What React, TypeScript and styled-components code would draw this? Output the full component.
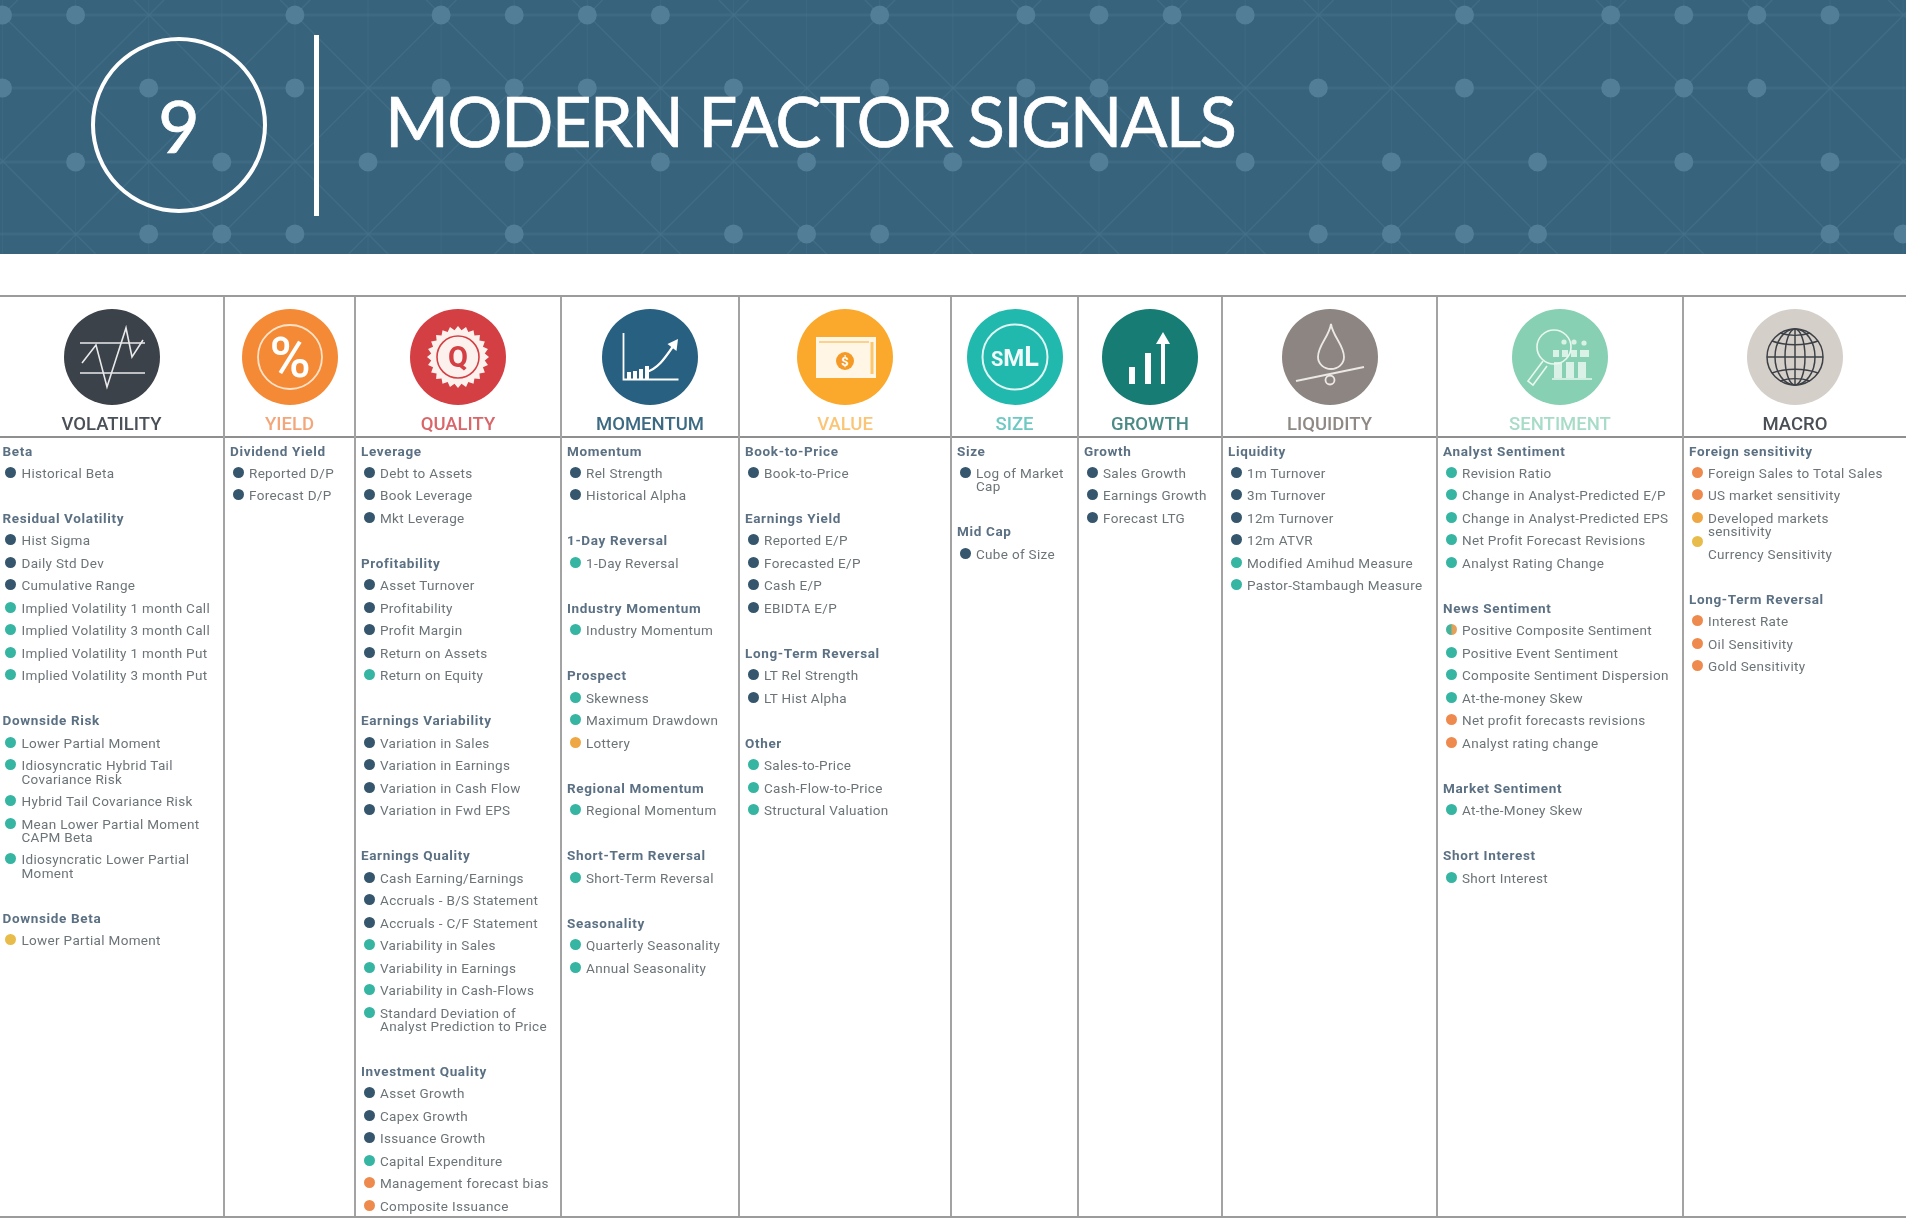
import { ReactNode } from 'react';
import styled, { createGlobalStyle } from 'styled-components';

const GlobalStyle = createGlobalStyle`
  html, body {
    margin: 0;
    padding: 0;
    background: #fff;
  }
  body {
    font-family: Roboto, "Liberation Sans", sans-serif;
    overflow: hidden;
  }
`;

const Page = styled.div`
  width: 1906px;
  height: 1218px;
  overflow: hidden;
`;

const Banner = styled.header`
  position: relative;
  height: 250px;
  padding: 0 0 4px 91px;
  display: flex;
  align-items: center;
  background: #38637d;
  overflow: hidden;
`;

const BannerArt = styled.svg`
  position: absolute;
  inset: 0;
  width: 1906px;
  height: 254px;
`;

const Badge = styled.div`
  position: relative;
  box-sizing: border-box;
  width: 176px;
  height: 176px;
  border: 4px solid #fff;
  border-radius: 50%;
  display: flex;
  align-items: center;
  justify-content: center;
  color: #fff;
  font: 400 72px/1 Lato, sans-serif;
  -webkit-text-stroke: 0.7px #fff;
`;

const Divider = styled.div`
  position: relative;
  width: 5px;
  height: 181px;
  margin: 0 66px 0 47px;
  background: #fff;
`;

const Title = styled.h1`
  position: relative;
  margin: 0 0 10px;
  color: #fff;
  font: 400 69px/1 Lato, sans-serif;
  letter-spacing: -1.7px;
  -webkit-text-stroke: 0.7px #fff;
  white-space: nowrap;
`;

const Table = styled.section`
  display: flex;
  box-sizing: border-box;
  height: 923px;
  margin-top: 41px;
  border-top: 2px solid #9b9b9b;
  border-bottom: 2px solid #9b9b9b;
  filter: blur(0.6px);
`;

const Column = styled.div<{ $width: number; $first?: boolean }>`
  flex: none;
  box-sizing: border-box;
  width: ${(p) => p.$width}px;
  border-left: ${(p) => (p.$first ? 'none' : '2px solid #a3a3a3')};
`;

const ColumnHead = styled.div`
  height: 141px;
  box-sizing: border-box;
  padding-top: 12px;
  border-bottom: 2px solid #8f8f8f;
  display: flex;
  flex-direction: column;
  align-items: center;
`;

const IconDisc = styled.svg`
  display: block;
  width: 96px;
  height: 96px;
  flex: none;
`;

const ColumnLabel = styled.div<{ $color: string }>`
  margin-top: 8px;
  color: ${(p) => p.$color};
  font-size: 18.5px;
  font-weight: 500;
  line-height: 22px;
  white-space: nowrap;
`;

const ColumnBody = styled.div<{ $first?: boolean }>`
  padding: 6.5px 0 0 ${(p) => (p.$first ? '2.5px' : '5px')};
`;

const Group = styled.div`
  display: flow-root;
  margin-bottom: 22.5px;
`;

const GroupTitle = styled.div`
  height: 13.3px;
  margin-bottom: 9.2px;
  color: #5b7083;
  font-size: 13.5px;
  font-weight: 700;
  line-height: 13.3px;
  letter-spacing: 0.65px;
  white-space: nowrap;
`;

const Item = styled.div`
  display: flex;
  align-items: flex-start;
  margin-bottom: 9.2px;
`;

const Dot = styled.span<{ $tone: string; $raised?: boolean }>`
  flex: none;
  width: 11px;
  height: 11px;
  margin: ${(p) => (p.$raised ? '-12px' : '0')} 5.5px 0 2.5px;
  border-radius: 50%;
  background: ${(p) => p.$tone};
`;

const ItemText = styled.span`
  color: #6c7478;
  font-size: 13.5px;
  line-height: 13.3px;
  letter-spacing: 0.32px;
  white-space: pre;
`;

const tones: Record<string, string> = {
  n: '#35566d',
  t: '#35b5a2',
  o: '#ee8a4e',
  a: '#efa743',
  y: '#e8bc4a',
  m: 'linear-gradient(90deg, #43b39c 0 40%, #e3a15a 60% 100%)',
};

type Entry = [string, keyof typeof tones | string, boolean?];
type FactorGroup = { title: string; items: Entry[] };

const rows = (tone: string, ...names: string[]): Entry[] => names.map((n) => [n, tone]);

const diamondLines = () => {
  const lines: ReactNode[] = [];
  for (let k = -2; k < 15; k++) {
    const a = 134 + 146.2 * k;
    const b = 164 + 146.2 * k;
    lines.push(<line key={`a${k}`} x1={a} y1={0} x2={a + 260} y2={260} />);
    lines.push(<line key={`b${k}`} x1={b} y1={0} x2={b - 260} y2={260} />);
  }
  return lines;
};

const nodeRows: [number, number[]][] = [
  [15, [0, 1, 4, 6, 7, 8, 9, 12, 14, 15, 16, 17, 20, 22, 23, 24, 25]],
  [88, [0, 2, 4, 6, 7, 8, 10, 12, 14, 15, 18, 20, 22, 23, 24]],
  [162, [1, 3, 5, 7, 9, 11, 13, 15, 17, 19, 21, 23, 25]],
  [234, [2, 3, 4, 7, 10, 11, 12, 18, 19, 20, 21, 25, 26]],
];
const nodeX = (i: number) => 2.5 + 73.1 * i;

const BannerPattern = () => (
  <BannerArt viewBox="0 0 1906 254">
    <g stroke="#4a7690" strokeWidth="1.4" opacity="0.5">
      {diamondLines()}
    </g>
    <g stroke="#4a7690" strokeWidth="1.2" opacity="0.3">
      {Array.from({ length: 27 }, (_, i) => (
        <line key={i} x1={nodeX(i)} y1={0} x2={nodeX(i)} y2={254} />
      ))}
    </g>
    <g stroke="#47728c" strokeWidth="3" opacity="0.5">
      {nodeRows.map(([y]) => (
        <line key={y} x1={0} y1={y} x2={1906} y2={y} />
      ))}
    </g>
    <g fill="#527e98">
      {nodeRows.map(([y, xs]) =>
        xs.map((i) => <circle key={`${y}-${i}`} cx={nodeX(i)} cy={y} r={9.5} />)
      )}
    </g>
  </BannerArt>
);

const VolatilityIcon = () => (
  <IconDisc viewBox="0 0 96 96">
    <circle cx="48" cy="48" r="48" fill="#3c4249" />
    <g fill="none" stroke="#e8e9ea" strokeWidth="1.6">
      <path d="M16 34H81M16 64H81" />
      <path d="M18 54L32 36L43 78L62 19L68 48L79 31" />
    </g>
  </IconDisc>
);

const YieldIcon = () => (
  <IconDisc viewBox="0 0 96 96">
    <circle cx="48" cy="48" r="48" fill="#f58a36" />
    <circle cx="48" cy="48" r="32" fill="none" stroke="#fde2c8" strokeWidth="1.8" />
    <text x="48" y="68" textAnchor="middle" fill="#fff" fontFamily="Roboto, sans-serif" fontWeight="500" fontSize="56">
      %
    </text>
  </IconDisc>
);

const gearPoints = () => {
  const pts: string[] = [];
  const teeth = 24;
  for (let i = 0; i < teeth * 2; i++) {
    const r = i % 2 === 0 ? 31 : 27;
    const ang = (i * Math.PI) / teeth;
    pts.push(`${(48 + r * Math.cos(ang)).toFixed(2)},${(48 + r * Math.sin(ang)).toFixed(2)}`);
  }
  return pts.join(' ');
};

const QualityIcon = () => (
  <IconDisc viewBox="0 0 96 96">
    <circle cx="48" cy="48" r="48" fill="#d43f44" />
    <polygon points={gearPoints()} fill="#fdf1ee" />
    <circle cx="48" cy="48" r="21" fill="none" stroke="#d43f44" strokeWidth="1.6" />
    <text x="48" y="58" textAnchor="middle" fill="#d43f44" fontFamily="Roboto, sans-serif" fontWeight="700" fontSize="29">
      Q
    </text>
  </IconDisc>
);

const MomentumIcon = () => (
  <IconDisc viewBox="0 0 96 96">
    <circle cx="48" cy="48" r="48" fill="#276080" />
    <path d="M21.5 24V70.5H76.5" fill="none" stroke="#fff" strokeWidth="1.8" />
    <path d="M25 70V63H29V70ZM31 70V62H35V70ZM37 70V60H41V70ZM43 70V57H47V70Z" fill="#fff" />
    <path d="M44 63C56 60 63 49 72 36" fill="none" stroke="#fff" strokeWidth="2.4" />
    <path d="M76 30L74.5 42L65.5 35Z" fill="#fff" />
  </IconDisc>
);

const ValueIcon = () => (
  <IconDisc viewBox="0 0 96 96">
    <circle cx="48" cy="48" r="48" fill="#fba92d" />
    <rect x="19" y="28" width="60" height="41" fill="#fff6e6" />
    <path d="M22 33H72" stroke="#fbc56f" strokeWidth="1.5" />
    <path d="M75 33V65" stroke="#fcc66c" strokeWidth="3" />
    <circle cx="48" cy="52" r="9" fill="#f59a25" />
    <text x="48" y="57" textAnchor="middle" fill="#fff" fontFamily="Roboto, sans-serif" fontWeight="700" fontSize="13">
      $
    </text>
  </IconDisc>
);

const SizeIcon = () => (
  <IconDisc viewBox="0 0 96 96">
    <circle cx="48" cy="48" r="48" fill="#21b9ae" />
    <circle cx="48" cy="48" r="32.5" fill="none" stroke="#dff6f3" strokeWidth="2" />
    <text x="48" y="57" textAnchor="middle" fill="#f1fbfa" fontFamily="Roboto, sans-serif" fontWeight="700">
      <tspan fontSize="20">S</tspan>
      <tspan fontSize="24">M</tspan>
      <tspan fontSize="27">L</tspan>
    </text>
  </IconDisc>
);

const GrowthIcon = () => (
  <IconDisc viewBox="0 0 96 96">
    <circle cx="48" cy="48" r="48" fill="#167c74" />
    <rect x="27" y="58" width="6" height="17" fill="#fff" />
    <rect x="43" y="44" width="6" height="31" fill="#fff" />
    <path d="M61 34V75" stroke="#fff" strokeWidth="4" />
    <path d="M61 23L68 35H54Z" fill="#fff" />
  </IconDisc>
);

const LiquidityIcon = () => (
  <IconDisc viewBox="0 0 96 96">
    <circle cx="48" cy="48" r="48" fill="#8d8582" />
    <g fill="none" stroke="#ece8e4" strokeWidth="1.8">
      <path d="M49 15C47 28 36 36 36 48C36 55 42 60 49 60C56 60 62 55 62 48C62 36 51 28 49 15Z" />
      <path d="M14 72L82 58" />
      <circle cx="48" cy="71" r="4.5" />
    </g>
  </IconDisc>
);

const SentimentIcon = () => (
  <IconDisc viewBox="0 0 96 96">
    <circle cx="48" cy="48" r="48" fill="#88d0b3" />
    <g fill="none" stroke="#e9f7f1" strokeWidth="1.6">
      <circle cx="42" cy="38" r="17" />
      <path d="M31 52L16 72L21 76L35 57" />
    </g>
    <g fill="#e9f7f1" opacity="0.85">
      <circle cx="52" cy="33" r="2.6" />
      <circle cx="62" cy="33" r="2.6" />
      <circle cx="72" cy="34" r="2.6" />
      <path d="M41 41H47V48H41ZM50 41H56V48H50ZM59 41H65V48H59ZM68 41H77V48H68Z" />
      <path d="M42 53H50V69H42ZM54 53H62V69H54ZM66 53H74V69H66Z" />
    </g>
    <path d="M40 70H80" stroke="#e9f7f1" strokeWidth="1.6" />
  </IconDisc>
);

const MacroIcon = () => (
  <IconDisc viewBox="0 0 96 96">
    <circle cx="48" cy="48" r="48" fill="#d5cfc9" />
    <g fill="none" stroke="#3d4146" strokeWidth="1.5">
      <circle cx="48" cy="48" r="28" />
      <ellipse cx="48" cy="48" rx="10" ry="28" />
      <ellipse cx="48" cy="48" rx="20" ry="28" />
      <path d="M48 20V76M20 48H76" />
      <path d="M25 32C38 37 58 37 71 32M25 64C38 59 58 59 71 64" />
      <path d="M33 24C42 27 54 27 63 24M33 72C42 69 54 69 63 72" />
    </g>
  </IconDisc>
);

type Factor = {
  label: string;
  color: string;
  width: number;
  icon: ReactNode;
  groups: FactorGroup[];
};

const factors: Factor[] = [
  {
    label: 'VOLATILITY',
    color: '#4a5058',
    width: 223,
    icon: <VolatilityIcon />,
    groups: [
      { title: 'Beta', items: rows('n', 'Historical Beta') },
      {
        title: 'Residual Volatility',
        items: [
          ...rows('n', 'Hist Sigma', 'Daily Std Dev', 'Cumulative Range'),
          ...rows(
            't',
            'Implied Volatility 1 month Call',
            'Implied Volatility 3 month Call',
            'Implied Volatility 1 month Put',
            'Implied Volatility 3 month Put'
          ),
        ],
      },
      {
        title: 'Downside Risk',
        items: rows(
          't',
          'Lower Partial Moment',
          'Idiosyncratic Hybrid Tail\nCovariance Risk',
          'Hybrid Tail Covariance Risk',
          'Mean Lower Partial Moment\nCAPM Beta',
          'Idiosyncratic Lower Partial\nMoment'
        ),
      },
      { title: 'Downside Beta', items: rows('y', 'Lower Partial Moment') },
    ],
  },
  {
    label: 'YIELD',
    color: '#f3a67a',
    width: 131,
    icon: <YieldIcon />,
    groups: [{ title: 'Dividend Yield', items: rows('n', 'Reported D/P', 'Forecast D/P') }],
  },
  {
    label: 'QUALITY',
    color: '#d9666a',
    width: 206,
    icon: <QualityIcon />,
    groups: [
      { title: 'Leverage', items: rows('n', 'Debt to Assets', 'Book Leverage', 'Mkt Leverage') },
      {
        title: 'Profitability',
        items: [
          ...rows('n', 'Asset Turnover', 'Profitability', 'Profit Margin', 'Return on Assets'),
          ...rows('t', 'Return on Equity'),
        ],
      },
      {
        title: 'Earnings Variability',
        items: rows('n', 'Variation in Sales', 'Variation in Earnings', 'Variation in Cash Flow', 'Variation in Fwd EPS'),
      },
      {
        title: 'Earnings Quality',
        items: [
          ...rows('n', 'Cash Earning/Earnings', 'Accruals - B/S Statement', 'Accruals - C/F Statement'),
          ...rows(
            't',
            'Variability in Sales',
            'Variability in Earnings',
            'Variability in Cash-Flows',
            'Standard Deviation of\nAnalyst Prediction to Price'
          ),
        ],
      },
      {
        title: 'Investment Quality',
        items: [
          ...rows('n', 'Asset Growth', 'Capex Growth', 'Issuance Growth'),
          ...rows('t', 'Capital Expenditure'),
          ...rows('o', 'Management forecast bias', 'Composite Issuance'),
        ],
      },
    ],
  },
  {
    label: 'MOMENTUM',
    color: '#3d6a83',
    width: 178,
    icon: <MomentumIcon />,
    groups: [
      { title: 'Momentum', items: rows('n', 'Rel Strength', 'Historical Alpha') },
      { title: '1-Day Reversal', items: rows('t', '1-Day Reversal') },
      { title: 'Industry Momentum', items: rows('t', 'Industry Momentum') },
      { title: 'Prospect', items: [...rows('t', 'Skewness', 'Maximum Drawdown'), ...rows('a', 'Lottery')] },
      { title: 'Regional Momentum', items: rows('t', 'Regional Momentum') },
      { title: 'Short-Term Reversal', items: rows('t', 'Short-Term Reversal') },
      { title: 'Seasonality', items: rows('t', 'Quarterly Seasonality', 'Annual Seasonality') },
    ],
  },
  {
    label: 'VALUE',
    color: '#fbc578',
    width: 212,
    icon: <ValueIcon />,
    groups: [
      { title: 'Book-to-Price', items: rows('n', 'Book-to-Price') },
      { title: 'Earnings Yield', items: rows('n', 'Reported E/P', 'Forecasted E/P', 'Cash E/P', 'EBIDTA E/P') },
      { title: 'Long-Term Reversal', items: rows('n', 'LT Rel Strength', 'LT Hist Alpha') },
      { title: 'Other', items: rows('t', 'Sales-to-Price', 'Cash-Flow-to-Price', 'Structural Valuation') },
    ],
  },
  {
    label: 'SIZE',
    color: '#6ec9c2',
    width: 127,
    icon: <SizeIcon />,
    groups: [
      { title: 'Size', items: rows('n', 'Log of Market\nCap') },
      { title: 'Mid Cap', items: rows('n', 'Cube of Size') },
    ],
  },
  {
    label: 'GROWTH',
    color: '#4b8b85',
    width: 144,
    icon: <GrowthIcon />,
    groups: [{ title: 'Growth', items: rows('n', 'Sales Growth', 'Earnings Growth', 'Forecast LTG') }],
  },
  {
    label: 'LIQUIDITY',
    color: '#8f8985',
    width: 215,
    icon: <LiquidityIcon />,
    groups: [
      {
        title: 'Liquidity',
        items: [
          ...rows('n', '1m Turnover', '3m Turnover', '12m Turnover', '12m ATVR'),
          ...rows('t', 'Modified Amihud Measure', 'Pastor-Stambaugh Measure'),
        ],
      },
    ],
  },
  {
    label: 'SENTIMENT',
    color: '#a8dcc8',
    width: 246,
    icon: <SentimentIcon />,
    groups: [
      {
        title: 'Analyst Sentiment',
        items: rows(
          't',
          'Revision Ratio',
          'Change in Analyst-Predicted E/P',
          'Change in Analyst-Predicted EPS',
          'Net Profit Forecast Revisions',
          'Analyst Rating Change'
        ),
      },
      {
        title: 'News Sentiment',
        items: [
          ...rows('m', 'Positive Composite Sentiment'),
          ...rows('t', 'Positive Event Sentiment', 'Composite Sentiment Dispersion', 'At-the-money Skew'),
          ...rows('o', 'Net profit forecasts revisions', 'Analyst rating change'),
        ],
      },
      { title: 'Market Sentiment', items: rows('t', 'At-the-Money Skew') },
      { title: 'Short Interest', items: rows('t', 'Short Interest') },
    ],
  },
  {
    label: 'MACRO',
    color: '#4a4f55',
    width: 224,
    icon: <MacroIcon />,
    groups: [
      {
        title: 'Foreign sensitivity',
        items: [
          ...rows('o', 'Foreign Sales to Total Sales', 'US market sensitivity'),
          ...rows('a', 'Developed markets\nsensitivity'),
          ['Currency Sensitivity', 'y', true],
        ],
      },
      { title: 'Long-Term Reversal', items: rows('o', 'Interest Rate', 'Oil Sensitivity', 'Gold Sensitivity') },
    ],
  },
];

const App = () => (
  <Page>
    <GlobalStyle />
    <Banner>
      <BannerPattern />
      <Badge>9</Badge>
      <Divider />
      <Title>MODERN FACTOR SIGNALS</Title>
    </Banner>
    <Table>
      {factors.map((factor, index) => (
        <Column key={factor.label} $width={factor.width} $first={index === 0}>
          <ColumnHead>
            {factor.icon}
            <ColumnLabel $color={factor.color}>{factor.label}</ColumnLabel>
          </ColumnHead>
          <ColumnBody $first={index === 0}>
            {factor.groups.map((group) => (
              <Group key={group.title}>
                <GroupTitle>{group.title}</GroupTitle>
                {group.items.map(([name, tone, raised]) => (
                  <Item key={name}>
                    <Dot $tone={tones[tone]} $raised={raised} />
                    <ItemText>{name}</ItemText>
                  </Item>
                ))}
              </Group>
            ))}
          </ColumnBody>
        </Column>
      ))}
    </Table>
  </Page>
);

export default App;
